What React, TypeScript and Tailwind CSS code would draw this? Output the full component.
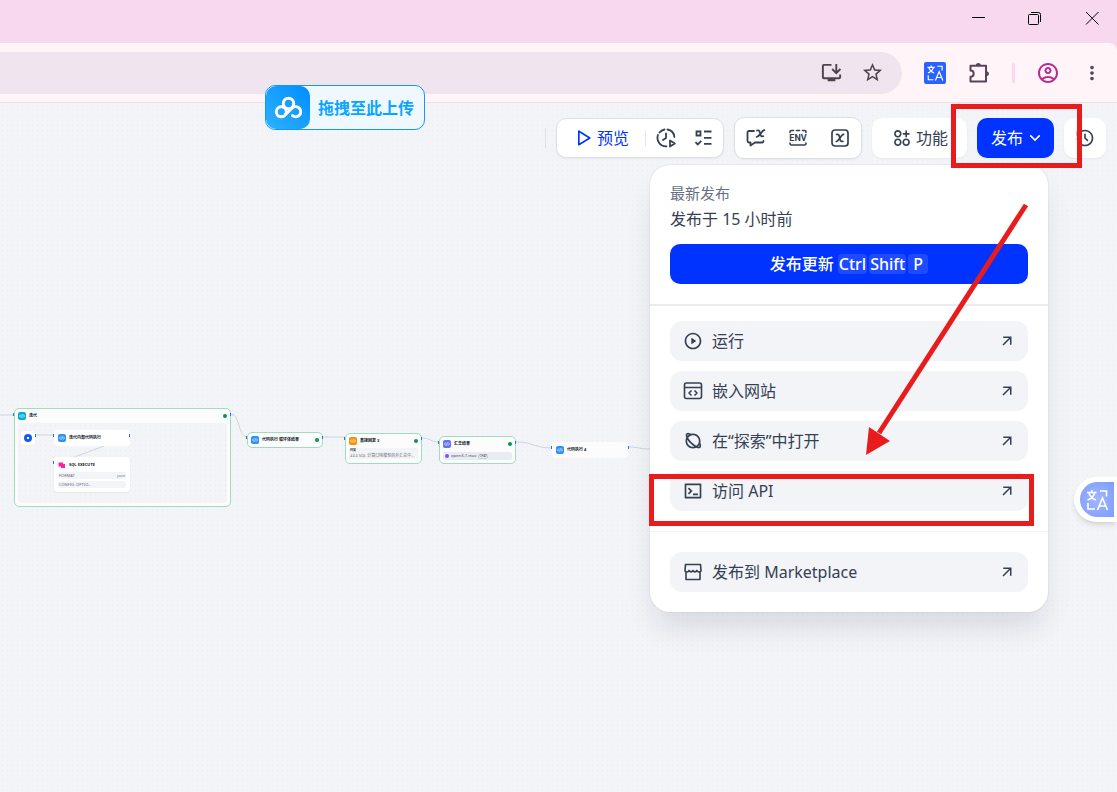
import React from "react";
import { MdInstallDesktop, MdMoreVert, MdOutlineAccountCircle, MdStarOutline } from "react-icons/md";
import {
  RiApps2AddLine,
  RiArrowDownSLine,
  RiArrowRightUpLine,
  RiHistoryLine,
  RiPlanetLine,
  RiPlayCircleLine,
  RiPlayLargeLine,
  RiTerminalBoxLine,
} from "react-icons/ri";

const TranslateGlyph = ({ className }: { className?: string }) => (
  <svg viewBox="0 0 24 24" className={className} fill="none" stroke="currentColor" strokeWidth="1.6">
    <path d="M2 4.500h9.500M6.800 2v2.500M3.800 4.500c.8 3.500 3.500 6 7 7.500M9.800 4.500C9 8 6 10.800 2.500 12" />
    <path d="M15 3h6.500v5.500M3 15v6h7" />
    <path d="M12.500 22 17.500 10l5 12M14.500 18h6" />
  </svg>
);

const PuzzleIcon = () => (
  <svg viewBox="0 0 22 22" className="size-[22px]" fill="none" stroke="#5a4456" strokeWidth="2">
    <path d="M2.500 3.800h15.500v15.700H2.500v-4.700c1.900 0 3.200-1.300 3.200-3.100s-1.300-3.100-3.200-3.100z" strokeLinejoin="round" />
    <path d="M7.800 3.500a2.500 2.500 0 0 1 5 0zM18.500 9.200a2.500 2.500 0 0 1 0 5z" fill="#5a4456" stroke="none" />
  </svg>
);

const ClockPlayIcon = () => (
  <svg viewBox="0 0 20 20" className="size-5" fill="none" stroke="currentColor" strokeWidth="1.8" strokeLinecap="round" strokeLinejoin="round">
    <path d="M18.400 9A8.500 8.500 0 0 0 11.500 1.500M8.500 1.500A8.500 8.500 0 0 0 3.500 4.500M2 7A8.500 8.500 0 0 0 10.500 18.400" />
    <path d="M10 5.300V10l-3 2" />
    <path d="M14 12.500v6l4.800-3z" />
  </svg>
);

const ChecklistIcon = () => (
  <svg viewBox="0 0 20 20" className="size-5" fill="none" stroke="currentColor" strokeWidth="1.8">
    <path d="M3.500 3.500h4v4h-4zM11 3.500h7.500M11 9.800h7.500M11 15.800h7.500M2.500 14.200l2.200 2.200 3.600-3.600" />
  </svg>
);

const BubbleXIcon = () => (
  <svg viewBox="0 0 20 20" className="size-5" fill="none" stroke="currentColor" strokeWidth="1.8" strokeLinecap="round" strokeLinejoin="round">
    <path d="M8 3H3C2.200 3 1.500 3.700 1.500 4.500V13c0 .8.700 1.500 1.500 1.500h1.500V17.500l4.500-3h7c.8 0 1.500-.7 1.500-1.500" />
    <path d="M11 2.500c1.500-.5 2.300 0 2.700 1.500l.9 3c.4 1.300 1.200 1.700 2.700 1.200M18.500 2.200c-3 .2-4.500 6.300-7.800 6.600" />
  </svg>
);

const EnvIcon = () => (
  <svg viewBox="0 0 20 20" className="size-5" fill="none" stroke="currentColor" strokeWidth="1.6" strokeLinecap="round">
    <path d="M2 4.500V4c0-.9.600-1.500 1.500-1.500h2M8.500 2.500h3M14.500 2.500h2c.9 0 1.500.6 1.500 1.500v.5M2 15v.5c0 .9.600 1.500 1.500 1.500h13c.9 0 1.500-.6 1.500-1.500V15" />
    <text x="10" y="12.900" textAnchor="middle" fontSize="9" fontWeight="700" fill="currentColor" stroke="none" fontFamily="Roboto, sans-serif">
      ENV
    </text>
  </svg>
);

const BoxXIcon = () => (
  <svg viewBox="0 0 20 20" className="size-5" fill="none" stroke="currentColor" strokeWidth="1.7" strokeLinecap="round">
    <rect x="2" y="2" width="16" height="16" rx="3" />
    <path d="M6.500 6.500c1.500-.5 2.300 0 2.700 1.500l1.100 4c.4 1.300 1.200 1.800 2.700 1.300M13.500 6.300c-2.800.3-4.200 7-7.300 7.200" />
  </svg>
);

const CodeWindowIcon = () => (
  <svg viewBox="0 0 20 20" className="size-5" fill="none" stroke="currentColor" strokeWidth="1.6" strokeLinejoin="round">
    <rect x="1.500" y="2" width="17" height="15.500" rx="2" />
    <path d="M1.500 6.500h17M8.500 9.500 6 12l2.500 2.500M11.500 9.500 14 12l-2.500 2.500" />
  </svg>
);

const StoreIcon = () => (
  <svg viewBox="0 0 20 20" className="size-5" fill="none" stroke="currentColor" strokeWidth="1.6" strokeLinejoin="round">
    <path d="M2.500 2.500h15l.5 6.500c-1.300 1.400-3 1.300-4.200-.5-1 1.800-2.800 1.800-3.800 0-1 1.800-2.800 1.800-3.800 0C5 10.300 3.300 10.400 2 9z" />
    <path d="M3 9.500v8h14v-8" />
  </svg>
);

const entries = [
  { label: "运行", icon: <RiPlayCircleLine className="size-5" /> },
  { label: "嵌入网站", icon: <CodeWindowIcon /> },
  { label: "在“探索”中打开", icon: <RiPlanetLine className="size-5" /> },
  { label: "访问 API", icon: <RiTerminalBoxLine className="size-5" /> },
];

const MenuLink = ({ label, icon }: { label: string; icon: React.ReactNode }) => (
  <a href="#" className="flex h-10 items-center gap-2 rounded-xl bg-[#f2f4f8] pl-[13px] pr-3 text-[#354052]">
    {icon}
    <span className="flex-1 pl-px">{label}</span>
    <RiArrowRightUpLine className="size-[18px]" />
  </a>
);

const PublishMenu = () => (
  <div className="absolute right-[69px] top-[62px] z-10 w-[398px] rounded-[20px] bg-white shadow-[0_20px_30px_-6px_rgba(16,24,40,0.12),0_0_2px_rgba(16,24,40,0.14)]">
    <div className="p-5 pt-[18px]">
      <div className="text-[15px] leading-5 text-[#676f83]">最新发布</div>
      <div className="mt-1 leading-6 text-[#354052]">发布于 15 小时前</div>
      <button className="mt-[13px] flex h-10 w-full items-center justify-center rounded-[10px] bg-[#0033ff] font-medium text-white">
        发布更新
        <span className="ml-1 flex gap-0.5">
          <kbd className="rounded bg-white/12 px-px font-[inherit] leading-5">Ctrl</kbd>
          <kbd className="rounded bg-white/12 px-px font-[inherit] leading-5">Shift</kbd>
          <kbd className="w-5 rounded bg-white/12 font-[inherit] leading-5">P</kbd>
        </span>
      </button>
    </div>
    <div className="flex flex-col gap-[10px] border-t-2 border-[#ebecef] px-5 pb-5 pt-[15px]">
      {entries.map((e) => (
        <MenuLink key={e.label} label={e.label} icon={e.icon} />
      ))}
    </div>
    <div className="border-t border-[#f2f3f5] p-5">
      <MenuLink label="发布到 Marketplace" icon={<StoreIcon />} />
    </div>
  </div>
);

const NodeIcon = ({ className }: { className: string }) => (
  <span className={`flex size-2 shrink-0 items-center justify-center rounded-xs text-white ${className}`}>
    <svg viewBox="0 0 10 10" className="size-[6px]" fill="none" stroke="currentColor" strokeWidth="1.200">
      <path d="M3 2.500.8 5 3 7.500M7 2.500 9.200 5 7 7.500M5.600 2.500l-1.200 5" />
    </svg>
  </span>
);

const Done = () => <span className="ml-auto size-1 rounded-full bg-[#079455]" />;

const NodeTitle = ({ title, color, done }: { title: string; color: string; done?: boolean }) => (
  <div className="flex items-center gap-[3px] whitespace-nowrap text-[4px] font-bold leading-none text-[#101828]">
    <NodeIcon className={color} />
    {title}
    {done && <Done />}
  </div>
);

// anchor points of the nodes, on the canvas
const ports = [[14, 311], [231, 311], [36, 332], [54, 332], [130, 332], [54, 359], [247, 334], [323, 334], [345, 335], [422, 335], [439, 339], [516, 339], [552, 344], [629, 344]];

const Flow = () => (
  <div className="absolute inset-0 overflow-hidden">
    <div className="absolute left-[14px] top-[305px] h-[99px] w-[217px] rounded-[5px] border border-[#9fdcc0] bg-[#fcfcfd] p-[3px]">
      <NodeTitle title="迭代" color="bg-[#06aed4]" done />
      <div className="mt-[3px] h-[80px] rounded bg-[#f2f4f7] bg-[radial-gradient(#eaecf1_0.5px,transparent_0.5px)] bg-size-[5px_5px]" />
    </div>
    <svg className="absolute inset-0 size-full" fill="none" stroke="#d0d5dd" strokeWidth="1">
      <path d="M0 312h14M36 332h18M104 343 64 358M231 311c9 0 7 23 16 23M323 334h22M422 335c9 0 8 4 17 4M516 339c18 0 18 6 36 6M629 344c10 0 10 2 21 2" />
    </svg>
    <div className="absolute left-[21px] top-[328px] flex size-[14px] items-center justify-center rounded bg-white">
      <span className="flex size-2 items-center justify-center rounded-full bg-[#155aef]">
        <span className="size-0.5 bg-white" />
      </span>
    </div>
    <div className="absolute left-[54px] top-[327px] w-[76px] rounded bg-white p-1">
      <NodeTitle title="迭代内部代码执行" color="bg-[#2e90fa]" />
    </div>
    <div className="absolute left-[54px] top-[354px] w-[76px] rounded bg-white p-1 text-[4px] leading-none shadow-xs">
      <div className="flex items-center gap-[3px] pb-[3px] font-bold text-[#101828]">
        <svg viewBox="0 0 8 8" className="size-2" fill="#ff1fa5">
          <path d="M.5 1.500h4.500V3h2v4h-4V5.500H.5z" />
        </svg>
        SQL EXECUTE
      </div>
      <div className="mb-0.5 flex h-[7px] items-center justify-between rounded-xs bg-[#f2f4f7] px-px text-[#676f83]">
        <span>FORMAT</span>
        <span>json</span>
      </div>
      <div className="flex h-[7px] items-center rounded-xs bg-[#f2f4f7] px-px text-[#676f83]">CONFIG. OPTIO...</div>
    </div>
    <div className="absolute left-[247px] top-[329px] w-[76px] rounded-[5px] border border-[#9fdcc0] bg-[#fcfcfd] p-[3px]">
      <NodeTitle title="代码执行 循环体结果" color="bg-[#2e90fa]" done />
    </div>
    <div className="absolute left-[345px] top-[330px] h-[31px] w-[77px] rounded-[5px] border border-[#9fdcc0] bg-[#fcfcfd] p-[3px]">
      <NodeTitle title="直接回复 3" color="bg-[#f79009]" done />
      <div className="mt-[3px] h-[11px] overflow-hidden whitespace-nowrap rounded-xs bg-[#f2f4f7] px-px text-[4px] leading-[5px] text-[#676f83]">
        <b className="block text-[3px] text-[#354052]">回复</b>
        ### SQL 计算口味模型的外汇总中...
      </div>
    </div>
    <div className="absolute left-[439px] top-[333px] h-[28px] w-[77px] rounded-[5px] border border-[#9fdcc0] bg-[#fcfcfd] p-[3px]">
      <NodeTitle title="汇总结果" color="bg-[#6172f3]" done />
      <div className="mt-1 flex h-2 items-center gap-0.5 rounded-xs bg-[#e9ecf1] px-0.5 text-[4px] leading-none text-[#495464]">
        <span className="size-1 rounded-full bg-[#6f5bea]" />
        qwen3.7-max
        <span className="rounded-xs border border-[#c9ced8] text-[3px]">CHAT</span>
      </div>
    </div>
    <div className="absolute left-[552px] top-[339px] w-[76px] rounded bg-[#fcfcfd] p-1">
      <NodeTitle title="代码执行 4" color="bg-[#2e90fa]" />
    </div>
    {ports.map(([x, y]) => (
      <span key={`${x}-${y}`} className="absolute h-[3px] w-px bg-[#2970ff]" style={{ left: x - 1, top: y - 1 }} />
    ))}
  </div>
);

const Header = () => (
  <div className="relative flex items-center justify-end gap-[10px] pr-[11px] pt-[14px] text-[#354052]">
    <div className="h-5 w-px bg-[#dfe1e6]" />
    <div className="flex h-10 items-center rounded-[10px] border border-[#dcdfe5] bg-white shadow-xs">
      <button className="flex items-center gap-1 pl-4 pr-4 text-[#0033ff]">
        <RiPlayLargeLine className="size-5" />
        预览
      </button>
      <div className="h-4 w-px bg-[#e3e5ea]" />
      <div className="flex gap-[17px] px-[10px]">
        <button aria-label="运行历史"><ClockPlayIcon /></button>
        <button aria-label="检查清单"><ChecklistIcon /></button>
      </div>
    </div>
    <div className="flex h-[42px] items-center gap-[22px] rounded-[10px] border border-[#dcdfe5] bg-white px-[11px] shadow-xs">
      <button aria-label="会话变量"><BubbleXIcon /></button>
      <button aria-label="环境变量"><EnvIcon /></button>
      <button aria-label="系统变量"><BoxXIcon /></button>
    </div>
    <button className="flex h-10 items-center gap-1 rounded-[10px] bg-white pl-5 pr-[19px] shadow-xs">
      <RiApps2AddLine className="size-5" />
      功能
    </button>
    <button className="flex h-10 items-center gap-0.5 rounded-[10px] bg-[#0033ff] pl-[14px] pr-[9px] text-white shadow-xs">
      发布
      <RiArrowDownSLine className="size-5" />
    </button>
    <button aria-label="版本历史" className="flex h-10 w-[42px] items-center justify-center rounded-[10px] bg-white shadow-xs">
      <RiHistoryLine className="size-5" />
    </button>
  </div>
);

const BrowserBar = () => (
  <div className="bg-[#f7d8ee]">
    <div className="flex h-[43px] items-center justify-end gap-[41px] pb-[7px] pr-[17px] text-black">
      <button aria-label="最小化">
        <svg viewBox="0 0 16 16" className="size-4" stroke="currentColor"><path d="M2 7.500h13" /></svg>
      </button>
      <button aria-label="还原">
        <svg viewBox="0 0 16 16" className="size-4" fill="none" stroke="currentColor">
          <rect x="1.500" y="4.500" width="10" height="10" rx="1" />
          <path d="M4 2.500h7.500a2 2 0 0 1 2 2V12" />
        </svg>
      </button>
      <button aria-label="关闭">
        <svg viewBox="0 0 16 16" className="size-4" stroke="currentColor"><path d="m2 2 12.500 12.500M14.500 2 2 14.500" /></svg>
      </button>
    </div>
    <div className="flex h-[60px] items-center gap-[22px] rounded-tr-lg border-b border-[#f3dbe6] bg-[#fff5f9] pr-[14px] text-[#5a4456]">
      <div className="flex h-[42px] flex-1 items-center justify-end gap-[18px] rounded-r-full bg-[#f0e5ee] pr-[18px] text-[#4d444c]">
        <button aria-label="安装"><MdInstallDesktop className="size-[23px]" /></button>
        <button aria-label="收藏"><MdStarOutline className="size-[23px]" /></button>
      </div>
      <button aria-label="翻译" className="flex size-[22px] items-center justify-center rounded-xs bg-[#2962ff] text-white">
        <TranslateGlyph className="size-[18px]" />
      </button>
      <button aria-label="扩展程序"><PuzzleIcon /></button>
      <div className="h-5 w-[3px] rounded-full bg-[#ffd6f0]" />
      <button aria-label="个人资料" className="text-[#b72b91]"><MdOutlineAccountCircle className="-m-px size-6" /></button>
      <button aria-label="更多"><MdMoreVert className="size-[22px]" /></button>
    </div>
  </div>
);

const DropZone = () => (
  <div className="absolute left-[265px] top-[85px] z-20 flex h-[45px] items-center overflow-hidden rounded-[10px] border border-[#1296ff] bg-[#f0f8ff] pr-[10px] font-bold text-[#0aa5ff]">
    <div className="flex h-full w-11 items-center justify-center rounded-[10px] bg-linear-to-tr from-[#2bb2ff] to-[#008cff]">
      <svg viewBox="0 0 28 24" className="h-6 w-7" fill="none" stroke="white" strokeWidth="3" strokeLinecap="round">
        <circle cx="14.500" cy="7.500" r="5.200" />
        <circle cx="7.300" cy="15.800" r="5" />
        <path d="M11.500 18.500 18 12.300a5 5 0 1 1 .5 7.300" />
      </svg>
    </div>
    <span className="pl-2">拖拽至此上传</span>
  </div>
);

// red marks that lead from the publish button to the API entry
const Marks = () => (
  <div className="pointer-events-none absolute right-0 top-0 z-30">
    <div className="absolute right-[35px] top-[104px] h-16 w-[131px] border-5 border-[#e81c1c]" />
    <div className="absolute right-[83px] top-[474px] h-[52px] w-[385px] border-5 border-[#e81c1c]" />
    <svg viewBox="0 0 166 256" className="absolute right-[87px] top-[202px] h-64 w-[166px]">
      <path d="M162 3 15 231" stroke="#e81c1c" strokeWidth="5" />
      <path d="M5 225 26 239 2 253z" fill="#e81c1c" />
    </svg>
  </div>
);

const App = () => {
  return (
    <div className="relative flex min-h-screen flex-col overflow-hidden font-['Noto_Sans','Noto_Sans_CJK_SC',sans-serif] text-base">
      <BrowserBar />
      <main className="relative flex-1 bg-[#f2f4f8] bg-[radial-gradient(#eaecf1_0.5px,transparent_0.6px)] bg-size-[5px_5px]">
        <Flow />
        <Header />
        <PublishMenu />
        <button
          aria-label="翻译页面"
          className="absolute right-0 top-[374px] flex h-[45px] w-[43px] items-center rounded-l-full bg-white pl-[6px] shadow-md"
        >
          <span className="flex h-[35px] w-[34px] items-center justify-center rounded-l-full bg-[#86a4ff] bg-radial from-[#a3b6fb] to-[#7b9dff] text-white">
            <TranslateGlyph className="size-6" />
          </span>
        </button>
      </main>
      <DropZone />
      <Marks />
    </div>
  );
};

export default App;
